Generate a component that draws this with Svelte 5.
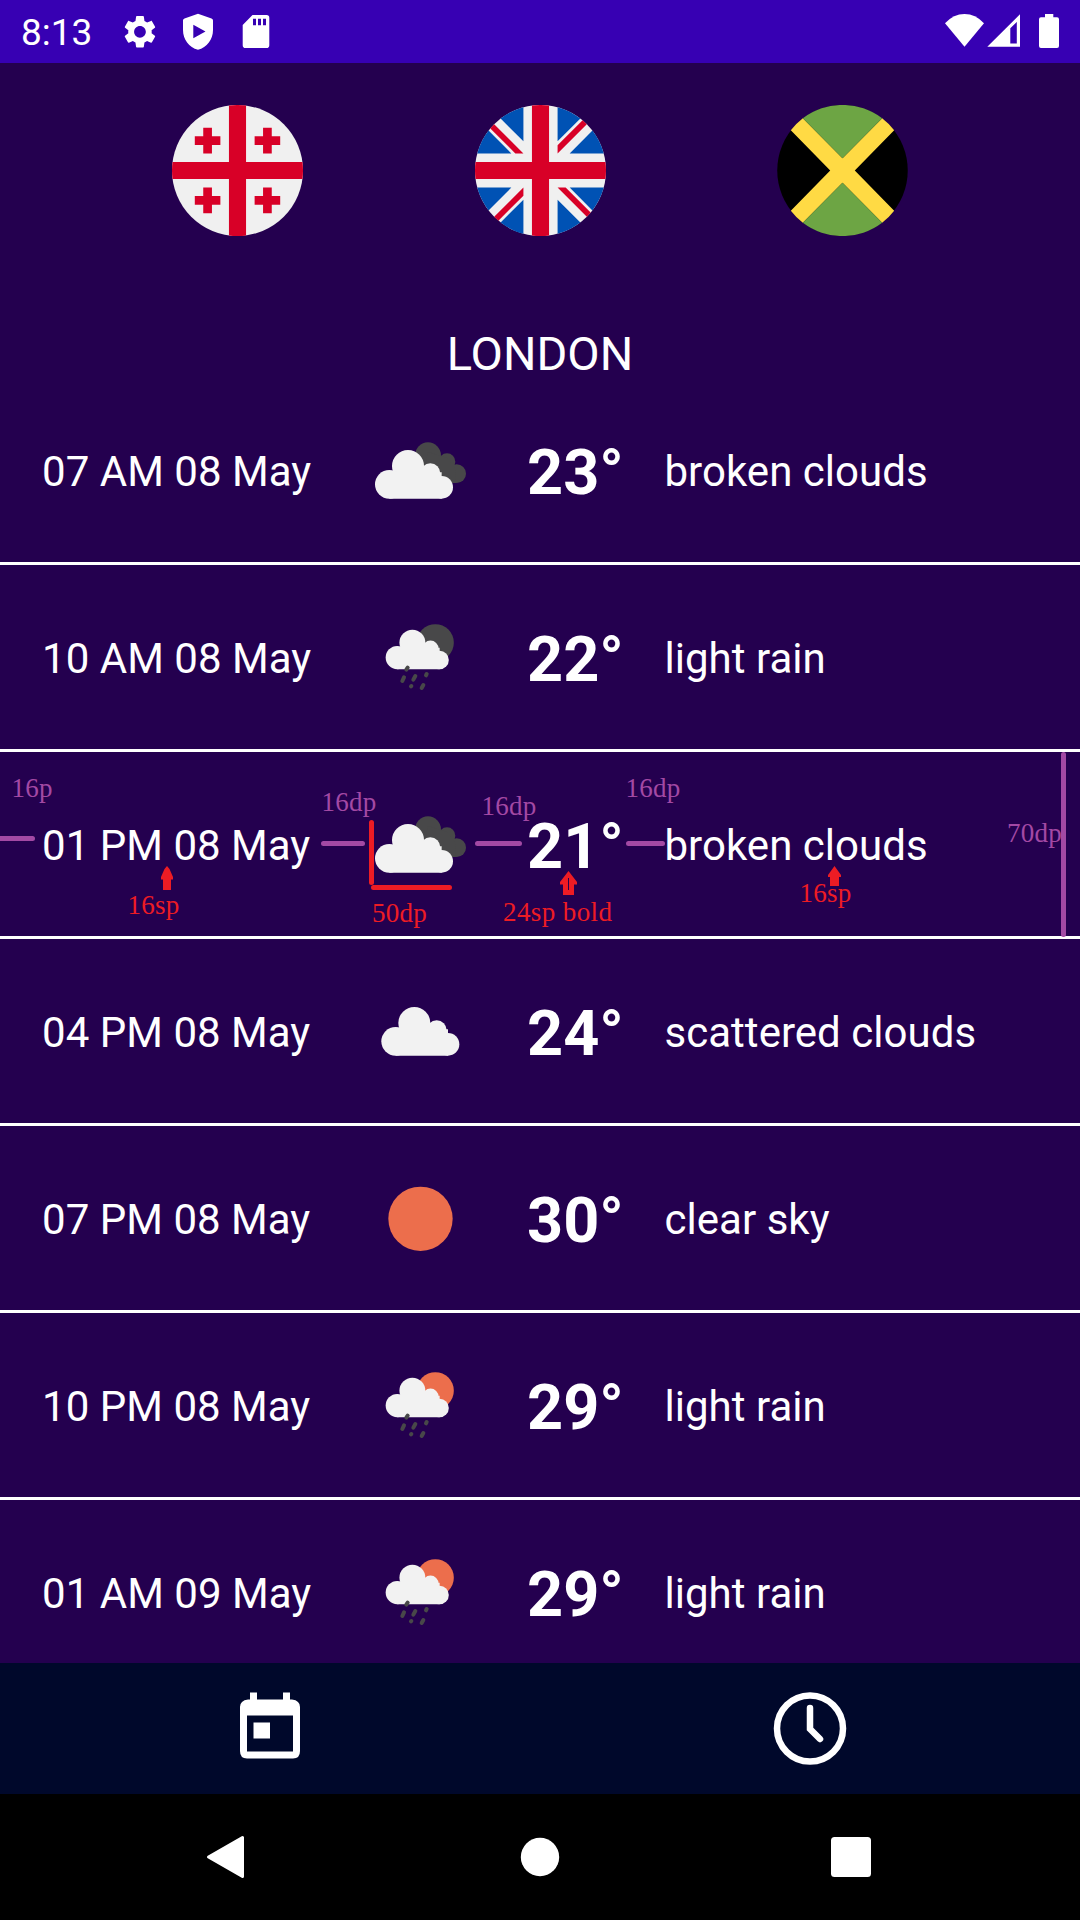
<script>
  const flags = ['georgia', 'uk', 'jamaica'];

  const forecast = [
    { time: '07 AM 08 May', icon: 'broken', temp: 23, text: 'broken clouds' },
    { time: '10 AM 08 May', icon: 'rain-night', temp: 22, text: 'light rain' },
    { time: '01 PM 08 May', icon: 'broken', temp: 21, text: 'broken clouds', notes: true },
    { time: '04 PM 08 May', icon: 'cloud', temp: 24, text: 'scattered clouds' },
    { time: '07 PM 08 May', icon: 'sun', temp: 30, text: 'clear sky' },
    { time: '10 PM 08 May', icon: 'rain-day', temp: 29, text: 'light rain' },
    { time: '01 AM 09 May', icon: 'rain-day', temp: 29, text: 'light rain' }
  ];
</script>

{#snippet cloud()}
  <circle cx="178" cy="171" r="48" />
  <circle cx="122" cy="226" r="43" />
  <circle cx="245" cy="193" r="30" />
  <circle cx="279" cy="235" r="34" />
  <path d="M122 190H279V269H122Z" />
{/snippet}

{#snippet weather(kind)}
  <svg class="weather" viewBox="0 0 393 393">
    {#if kind === 'sun'}
      <circle class="orange" cx="196.5" cy="197.5" r="96.5" />
    {:else if kind === 'cloud'}
      <g class="white">{@render cloud()}</g>
    {:else if kind === 'broken'}
      <g class="dark">
        <circle cx="219" cy="151" r="39" />
        <circle cx="276" cy="170" r="25" />
        <circle cx="305" cy="206" r="28" />
        <path d="M219 140L276 160L300 190L303 234H200Z" />
      </g>
      <g class="white" transform="translate(-19 12)">{@render cloud()}</g>
    {:else}
      <circle class={kind === 'rain-day' ? 'orange' : 'dark'} cx="241" cy="152" r="55.5" />
      <g class="white" transform="translate(28 13.5) scale(.81)">{@render cloud()}</g>
      <path class="drops" d="M158 227l-4 6M147 256l-5 11M181 252l-6 11M215 246l-2 4M169 282l-1 1M205 279l-5 9" />
    {/if}
  </svg>
{/snippet}

<div class="screen">
  <header class="status">
    <span class="clock">8:13</span>
    <svg class="notifications" viewBox="120 0 152 63">
      <g transform="translate(120.4 12.2) scale(1.63)">
        <path d="M19.14 12.94c.04-.3.06-.61.06-.94 0-.32-.02-.64-.07-.94l2.03-1.58c.18-.14.23-.41.12-.61l-1.92-3.32c-.12-.22-.37-.29-.59-.22l-2.39.96c-.5-.38-1.03-.7-1.62-.94l-.36-2.54c-.04-.24-.24-.41-.48-.41h-3.84c-.24 0-.43.17-.47.41l-.36 2.54c-.59.24-1.13.57-1.62.94l-2.39-.96c-.22-.08-.47 0-.59.22L2.74 8.87c-.12.21-.08.47.12.61l2.03 1.58c-.05.3-.09.63-.09.94s.02.64.07.94l-2.03 1.58c-.18.14-.23.41-.12.61l1.92 3.32c.12.22.37.29.59.22l2.39-.96c.5.38 1.03.7 1.62.94l.36 2.54c.05.24.24.41.48.41h3.84c.24 0 .44-.17.47-.41l.36-2.54c.59-.24 1.13-.56 1.62-.94l2.39.96c.22.08.47 0 .59-.22l1.92-3.32c.12-.22.07-.47-.12-.61l-2.01-1.58zM12 15.6c-1.98 0-3.6-1.62-3.6-3.6s1.62-3.6 3.6-3.6 3.6 1.62 3.6 3.6-1.62 3.6-3.6 3.6z" />
      </g>
      <path fill-rule="evenodd" d="M198 13.7L211.500 18.400Q213 19 213 20.600V30C213 39.500 207 47.500 198 49.800C189 47.500 183 39.500 183 30V20.600Q183 19 184.500 18.400ZM193.300 24.800V38.300L205.500 31.600Z" />
      <path fill-rule="evenodd" d="M252.500 15H266.500Q269.300 15 269.300 17.800V45.200Q269.300 48 266.500 48H245.500Q242.700 48 242.700 45.200V25ZM253 18.800V25.300H256V18.800ZM258 18.800V25.300H261V18.800ZM263 18.800V25.300H266V18.800Z" />
    </svg>
    <svg class="signals" viewBox="944 0 116 63">
      <path d="M945 23.300Q953.500 14 964.500 14T984 23.300L964.500 46.700Z" />
      <path fill-rule="evenodd" d="M987.300 46.800L1020 14.300V46.800ZM1010.300 28.300V43.500H1016.800V22Z" />
      <path d="M1045 14H1053.300V17.300H1057Q1059 17.300 1059 19.300V46Q1059 48 1057 48H1041Q1039 48 1039 46V19.300Q1039 17.300 1041 17.300H1045Z" />
    </svg>
  </header>

  <div class="flags">
    {#each flags as flag}
      <svg class="flag" viewBox="0 0 512 512">
        {#if flag === 'georgia'}
          <circle cx="256" cy="256" r="256" fill="#f0f0f0" />
          <g fill="#d80027">
            <path d="M509.833 222.609H289.392V2.167a258 258 0 0 0-66.783 0v220.442H2.167a258 258 0 0 0 0 66.783h220.442v220.441a258 258 0 0 0 66.783 0V289.392h220.441a258 258 0 0 0 0-66.783z" />
            {#each [[139.1, 139.1], [372.9, 139.1], [139.1, 372.9], [372.9, 372.9]] as [x, y]}
              <path transform="translate({x} {y})" d="M-17-50H17V-17H50V17H17V50H-17V17H-50V-17H-17Z" />
            {/each}
          </g>
        {:else if flag === 'uk'}
          <circle cx="256" cy="256" r="256" fill="#f0f0f0" />
          <path fill="#0052b4" d="M52.92 100.142c-20.109 26.163-35.272 56.318-44.101 89.077h133.178zM503.181 189.219c-8.829-32.758-23.993-62.913-44.101-89.076l-89.075 89.076zM8.819 322.784c8.83 32.758 23.993 62.913 44.101 89.075l89.074-89.075zM411.858 52.921c-26.163-20.109-56.317-35.272-89.076-44.102v133.177zM100.142 459.079c26.163 20.109 56.318 35.272 89.076 44.102V370.005zM189.217 8.819c-32.758 8.83-62.913 23.993-89.075 44.101l89.075 89.075zM322.783 503.181c32.758-8.83 62.913-23.993 89.075-44.101l-89.075-89.075zM370.005 322.784l89.075 89.076c20.108-26.162 35.272-56.318 44.101-89.076z" />
          <path fill="#d80027" d="M509.833 222.609H289.392V2.167a258 258 0 0 0-66.783 0v220.442H2.167a258 258 0 0 0 0 66.783h220.442v220.441a258 258 0 0 0 66.783 0V289.392h220.441a258 258 0 0 0 0-66.783zM322.783 322.784L437.019 437.02c5.254-5.252 10.266-10.743 15.048-16.435l-97.802-97.802zM189.217 322.784L74.98 437.019c5.252 5.254 10.743 10.266 16.435 15.048l97.802-97.804zM189.217 189.219L74.981 74.98c-5.254 5.252-10.266 10.743-15.048 16.435l97.803 97.803zM322.783 189.219L437.02 74.981c-5.252-5.254-10.743-10.266-16.435-15.047l-97.802 97.803z" />
        {:else}
          <circle cx="256" cy="256" r="255" />
          <path fill="#ffda44" d="M54 99A256 256 0 0 1 101 52L256 208L411 52A256 256 0 0 1 458 99L304 256L458 413A256 256 0 0 1 411 460L256 304L101 460A256 256 0 0 1 54 413L208 256Z" />
          <path fill="#6da544" d="M101 52A256 256 0 0 1 411 52L256 208ZM101 460A256 256 0 0 0 411 460L256 304Z" />
        {/if}
      </svg>
    {/each}
  </div>

  <h1>LONDON</h1>

  <main>
    {#each forecast as row}
      <div class="row">
        <span class="label">{row.time}</span>
        {@render weather(row.icon)}
        <strong>{row.temp}°</strong>
        <span class="label">{row.text}</span>
        {#if row.notes}
          <svg class="notes" viewBox="0 752 1080 187">
            <g class="purple">
              <text x="11.500" y="797">16p</text>
              <text x="321.500" y="811.400">16dp</text>
              <text x="481.500" y="815.400">16dp</text>
              <text x="625.500" y="797.400">16dp</text>
              <text x="1007" y="842">70dp</text>
              <path d="M-5 838.500H32.500M323.500 843.500H362.500M477.500 843.500H519.500M628.500 843.500H662.500M1063.500 754.500V934.500" />
            </g>
            <g class="red">
              <text x="127.500" y="914.400">16sp</text>
              <text x="372" y="922">50dp</text>
              <text class="wide" x="503" y="921.400">24sp bold</text>
              <text x="799.500" y="902.400">16sp</text>
              <path d="M371.500 822.500V882.500M373.500 887.500H449.500" />
              <path class="arrow" d="M167 866L169.500 869L173 877V879.500H171V890H163V879.500H161V877L164.500 869Z" />
              <path class="arrow" fill-rule="evenodd" d="M568.500 871L577 882V884.500H574V895H563V884.500H560V882ZM568 878V890H569V878Z" />
              <path class="arrow" d="M834.500 866L841 875V877H839V886H830V877H828V875Z" />
            </g>
          </svg>
        {/if}
      </div>
    {/each}
  </main>

  <nav class="tabs">
    <svg viewBox="0 0 80 80">
      <path fill-rule="evenodd" d="M20 3.500H27V10.500H53V3.500H60V10.500H62Q70 11.500 70 18V62Q70 69.500 63 69.500H17Q10 69.500 10 62V18Q10 11.500 18 10.500H20ZM17 26.500V62.500H63V26.500ZM23.500 33.500H40V49.500H23.500Z" />
    </svg>
    <svg viewBox="0 0 80 80">
      <g class="outline">
        <circle cx="40" cy="39.500" r="33" />
        <path d="M40 19V40L50 50" />
      </g>
    </svg>
  </nav>

  <footer class="system">
    <svg viewBox="0 0 48 48"><path stroke="#fff" stroke-width="3" stroke-linejoin="round" d="M6.500 24L40.500 4.500V43.500Z" /></svg>
    <svg viewBox="0 0 48 48"><circle cx="25" cy="24" r="19.200" /></svg>
    <svg viewBox="0 0 48 48"><rect x="4" y="4" width="40" height="40" rx="3.500" /></svg>
  </footer>
</div>

<style>
  :global(body) {
    margin: 0;
    background: #24004f;
  }

  .screen {
    width: 1080px;
    height: 1920px;
    display: flex;
    flex-direction: column;
    overflow: hidden;
    background: #24004f;
    color: #fff;
    font-family: Roboto, sans-serif;
  }

  svg {
    display: block;
    flex: none;
  }

  .status {
    height: 63px;
    flex: none;
    display: flex;
    align-items: center;
    box-sizing: border-box;
    padding: 0 20px 0 21px;
    background: #3700b3;
    fill: #fff;
  }

  .clock {
    width: 99px;
    padding-top: 2px;
    font-size: 37px;
    line-height: 44px;
  }

  .notifications {
    width: 152px;
    height: 63px;
  }

  .signals {
    width: 116px;
    height: 63px;
    margin-left: auto;
  }

  .flags {
    flex: none;
    display: flex;
    justify-content: space-evenly;
    padding-top: 42px;
  }

  .flag {
    width: 131px;
    height: 131px;
  }

  h1 {
    flex: none;
    height: 56px;
    margin: 90px 0 -4px;
    font-size: 47px;
    font-weight: 400;
    line-height: 56px;
    text-align: center;
  }

  main {
    flex: 1;
    min-height: 0;
    overflow: hidden;
  }

  .row {
    position: relative;
    display: grid;
    grid-template-columns: 271px 131px 96px 1fr;
    column-gap: 41.5px;
    align-items: center;
    height: 184px;
    padding-left: 42px;
    border-bottom: 3px solid #fff;
    white-space: nowrap;
  }

  .label {
    padding-top: 3px;
    font-size: 42px;
    line-height: 50px;
    letter-spacing: 0.03px;
  }

  strong {
    padding-top: 6px;
    font-size: 63px;
    font-weight: 700;
    line-height: 74px;
  }

  .weather {
    width: 131px;
    height: 131px;
  }

  .white {
    fill: #f2f2f2;
  }

  .dark {
    fill: #484849;
  }

  .orange {
    fill: #ec6e4c;
  }

  .drops {
    fill: none;
    stroke: #484849;
    stroke-width: 12;
    stroke-linecap: round;
  }

  /* Spacing and type notes laid over one list row */
  .notes {
    position: absolute;
    top: 0;
    left: 0;
    width: 1080px;
    height: 187px;
    font-family: 'Liberation Serif', serif;
    font-size: 27px;
    letter-spacing: 0.25px;
  }

  .notes path {
    fill: none;
    stroke-width: 5;
    stroke-linecap: round;
  }

  .purple {
    fill: #a349a4;
    stroke: #a349a4;
  }

  .red {
    fill: #ed1c24;
    stroke: #ed1c24;
  }

  .notes text {
    stroke: none;
  }

  .notes .wide {
    letter-spacing: 0.4px;
  }

  .notes .arrow {
    fill: #ed1c24;
    stroke: none;
  }

  .tabs {
    flex: none;
    display: grid;
    grid-template-columns: 1fr 1fr;
    place-items: center;
    height: 131px;
    background: #00082b;
    fill: #fff;
  }

  .tabs svg {
    width: 80px;
    height: 80px;
  }

  .outline {
    fill: none;
    stroke: #fff;
    stroke-width: 6.5;
    stroke-linecap: round;
  }

  .system {
    flex: none;
    display: flex;
    align-items: center;
    justify-content: space-between;
    box-sizing: border-box;
    height: 126px;
    padding: 0 205px 0 202px;
    background: #000;
    fill: #fff;
  }

  .system svg {
    width: 48px;
    height: 48px;
  }
</style>
